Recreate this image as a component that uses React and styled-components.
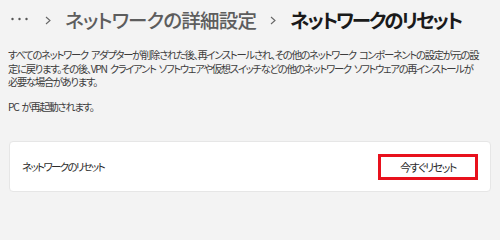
import React from 'react'
import styled, { createGlobalStyle } from 'styled-components'

const GlobalStyle = createGlobalStyle`
    html, body {
        margin: 0;
        padding: 0;
        background: #f3f3f3;
    }
    body {
        font-family: "Noto Sans CJK JP", "Noto Sans", sans-serif;
        font-feature-settings: "palt";
        color: #1b1b1b;
    }
`

const Page = styled.div`
    width: 500px;
    height: 203px;
    overflow: hidden;
    display: flex;
    flex-direction: column;
`

const Header = styled.div`
    display: flex;
    flex-direction: row;
    align-items: center;
    height: 38px;
    padding-left: 10px;
`

const Crumb = styled.span`
    font-size: 19.5px;
    font-weight: ${props => (props.current ? 700 : 500)};
    color: ${props => (props.current ? '#1a1a1a' : '#5d5d5d')};
    white-space: nowrap;
    letter-spacing: ${props => (props.current ? '-2.1px' : '-0.8px')};
`

const Sep = styled.span`
    display: flex;
    align-items: center;
    margin: ${props => props.margin};
`

const Description = styled.div`
    padding: 10px 9px 0 8px;
    font-size: 10.3px;
    line-height: 13.7px;
    color: #3c3c3c;
    letter-spacing: -1.27px;
    word-spacing: 2px;
    white-space: nowrap;

    & p {
        margin: 0 0 10.5px 0;
    }
`

const Card = styled.div`
    margin: 17px 9px 0 9px;
    height: 49px;
    background: #fff;
    border: 1px solid #e6e6e6;
    border-radius: 4px;
    display: flex;
    flex-direction: row;
    align-items: center;
    justify-content: space-between;
    padding: 0 12px;
`

const Label = styled.span`
    font-size: 10.5px;
    letter-spacing: -1.7px;
    color: #2b2b2b;
`

const ResetButton = styled.button`
    width: 100px;
    height: 26px;
    box-sizing: border-box;
    border: 3px solid #e8111d;
    background: #fff;
    font-family: inherit;
    font-feature-settings: "palt";
    font-size: 11px;
    letter-spacing: -1.4px;
    color: #2b2b2b;
    padding: 0;
    margin-top: 1px;
`

const Dots = () => (
    <svg width="20" height="6" viewBox="0 0 20 6">
        <circle cx="2.5" cy="3" r="1.2" fill="#555" />
        <circle cx="9.5" cy="3" r="1.2" fill="#555" />
        <circle cx="16.5" cy="3" r="1.2" fill="#555" />
    </svg>
)

const Chevron = ({ color }) => (
    <svg width="6" height="9" viewBox="0 0 6 9">
        <path d="M1 1 L5 4.5 L1 8" fill="none" stroke={color} strokeWidth="1.1" />
    </svg>
)

const App = () => {
    return (
        <Page>
            <GlobalStyle />
            <Header>
                <Dots />
                <Sep margin="2px 14px 0 15px"><Chevron color="#666" /></Sep>
                <Crumb>ネットワークの詳細設定</Crumb>
                <Sep margin="2px 14px 0 14px"><Chevron color="#666" /></Sep>
                <Crumb current>ネットワークのリセット</Crumb>
            </Header>
            <Description>
                <p>
                    すべてのネットワーク アダプターが削除された後、再インストールされ、その他のネットワーク コンポーネントの設定が元の設<br />
                    定に戻ります。その後、VPN クライアント ソフトウェアや仮想スイッチなどの他のネットワーク ソフトウェアの再インストールが<br />
                    必要な場合があります。
                </p>
                <p>PC が再起動されます。</p>
            </Description>
            <Card>
                <Label>ネットワークのリセット</Label>
                <ResetButton>今すぐリセット</ResetButton>
            </Card>
        </Page>
    )
}

export default App
